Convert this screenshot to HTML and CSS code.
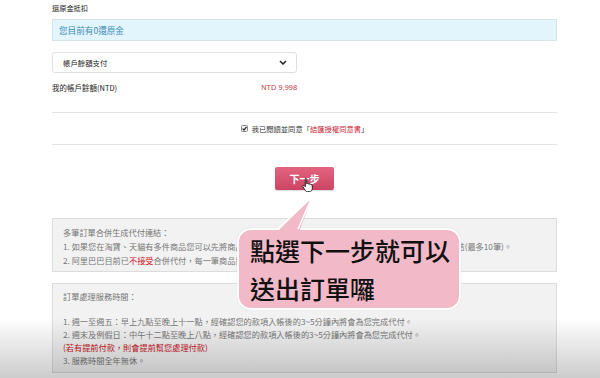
FILE: index.html
```html
<!DOCTYPE html>
<html lang="zh-Hant">
<head>
    <meta charset="UTF-8">
    <meta name="viewport" content="width=device-width, initial-scale=1.0">
    <title>付款確認</title>
    <link rel="stylesheet" href="styles.css">
</head>
<body>
    <div class="page">
        <div class="label">還原金抵扣</div>
        <div class="notice">您目前有0還原金</div>

        <div class="select">
            <span>帳戶餘額支付</span>
            <svg class="chevron" width="8" height="5" viewBox="0 0 8 5">
                <polyline points="1,1 4,4 7,1" fill="none" stroke="#222" stroke-width="1.5"/>
            </svg>
        </div>

        <div class="balance">
            <span>我的帳戶餘額(NTD)</span>
            <span class="amount">NTD 9,998</span>
        </div>

        <div class="agree">
            <span class="check">
                <svg width="7" height="7" viewBox="0 0 7 7">
                    <rect x="0.5" y="0.5" width="6" height="6" rx="1" fill="#f4f4f4" stroke="#888"/>
                    <polyline points="1.6,3.6 3,5 5.5,1.8" fill="none" stroke="#222" stroke-width="1.2"/>
                </svg>
            </span>
            我已閱讀並同意「<span class="link">結匯授權同意書</span>」
        </div>

        <div class="actions">
            <button class="next">下一步</button>
        </div>

        <div class="info-box">
            <div>多筆訂單合併生成代付連結：</div>
            <div>1. 如果您在淘寶、天貓有多件商品您可以先將商品加入購物車，再一起結帳，就可以合併生成為同一筆代付連結(最多10筆)。</div>
            <div>2. 阿里巴巴目前已<span class="warn">不接受</span>合併代付，每一筆商品需個別生成代付連結。</div>
        </div>

        <div class="info-box hours">
            <div class="title">訂單處理服務時間：</div>
            <div>1. 週一至週五：早上九點至晚上十一點，經確認您的款項入帳後的3~5分鐘內將會為您完成代付。</div>
            <div>2. 週末及例假日：中午十二點至晚上八點，經確認您的款項入帳後的3~5分鐘內將會為您完成代付。</div>
            <div class="warn">(若有提前付款，則會提前幫您處理付款)</div>
            <div>3. 服務時間全年無休。</div>
        </div>
    </div>

    <svg class="cursor" width="12" height="15" viewBox="0 0 12 15">
        <path d="M3.5 1.2c.7 0 1.2.5 1.2 1.2v4.3l.2-.1c.5-.3 1.1-.1 1.4.3.5-.3 1.1-.2 1.4.3.5-.2 1.1 0 1.3.5.6-.1 1.3.3 1.3 1v2.6c0 1.9-1.2 3.4-3.1 3.4H5.5c-.9 0-1.6-.4-2.1-1.1L1 9.9c-.4-.5-.3-1.1.2-1.4.5-.3 1-.2 1.3.2l.8 1V2.4c0-.7.2-1.2.2-1.2z" fill="#fff" stroke="#111" stroke-width="0.9"/>
    </svg>

    <div class="bubble">
        <div class="bubble-text">點選下一步就可以<br>送出訂單囉</div>
    </div>
    <svg class="tail" width="50" height="38" viewBox="0 0 50 38">
        <polygon points="7,37 42,2 29,37" fill="#f2b9c8"/>
        <polyline points="8,34 42,2 28,34" fill="none" stroke="#fff" stroke-width="1.5"/>
    </svg>

    <div class="shade"></div>
</body>
</html>
```

FILE: styles.css
```css
body {
    margin: 0;
    background: #fff;
    font-family: "Noto Sans CJK TC", "Liberation Sans", sans-serif;
    color: #333;
    position: relative;
    width: 600px;
    height: 378px;
    overflow: hidden;
}
.page {
    width: 505px;
    padding: 2px 0 0 52px;
}
.label {
    font-size: 7.2px;
    line-height: 12px;
    color: #222;
}
.notice {
    margin-top: 5px;
    height: 20px;
    line-height: 20px;
    padding-left: 6px;
    background: #e2f5fc;
    border: 1px solid #d8e4e8;
    color: #3a8cb8;
    font-size: 8.6px;
}
.select {
    margin-top: 11px;
    width: 224px;
    height: 19px;
    padding: 0 9px 0 10px;
    border: 1px solid #e0e0e0;
    border-radius: 3px;
    display: flex;
    align-items: center;
    justify-content: space-between;
    font-size: 7.4px;
    color: #222;
}
.balance {
    margin-top: 9px;
    width: 245px;
    display: flex;
    justify-content: space-between;
    font-size: 7.5px;
    line-height: 12px;
    color: #222;
}
.amount {
    color: #c23a4c;
    font-family: "Liberation Sans", sans-serif;
    font-size: 7.4px;
}
.agree {
    margin-top: 18px;
    height: 31px;
    border-top: 1px solid #e4e4e4;
    border-bottom: 1px solid #e4e4e4;
    display: flex;
    align-items: center;
    justify-content: center;
    font-size: 7.3px;
    color: #333;
}
.check {
    display: inline-flex;
    margin-right: 4px;
}
.link {
    color: #c7202e;
}
.actions {
    margin-top: 22px;
    display: flex;
    justify-content: center;
}
.next {
    width: 59px;
    height: 23px;
    border: none;
    border-radius: 2px;
    background: linear-gradient(#e2647f, #cc4564);
    box-shadow: 0 1px 1px rgba(0, 0, 0, 0.15);
    color: #fff;
    font-family: "Noto Sans CJK TC", sans-serif;
    font-size: 10px;
    font-weight: 700;
    padding: 0;
}
.info-box {
    margin-top: 28px;
    padding: 6px 10px 4px;
    background: #f2f2f2;
    border: 1px solid #dcdcdc;
    font-size: 8.2px;
    line-height: 14px;
    color: #777;
    white-space: nowrap;
    overflow: hidden;
}
.info-box.hours {
    margin-top: 11px;
    line-height: 13px;
    padding-bottom: 5px;
}
.hours .title {
    margin-bottom: 12px;
}
.warn {
    color: #c8141e;
}
.cursor {
    position: absolute;
    left: 302px;
    top: 177px;
}
.bubble {
    position: absolute;
    left: 237px;
    top: 228px;
    width: 220px;
    height: 78px;
    background: #f2b9c8;
    border: 2px solid #fff;
    border-radius: 14px;
    box-shadow: 0 0 1px rgba(0, 0, 0, 0.2);
}
.bubble-text {
    padding: 1px 0 0 11px;
    font-size: 25px;
    line-height: 38px;
    font-weight: 500;
    color: #111;
}
.tail {
    position: absolute;
    left: 270px;
    top: 195px;
}
.shade {
    position: absolute;
    left: 0;
    top: 318px;
    width: 600px;
    height: 60px;
    background: linear-gradient(rgba(0, 0, 0, 0), rgba(0, 0, 0, 0.2));
    pointer-events: none;
}
```
